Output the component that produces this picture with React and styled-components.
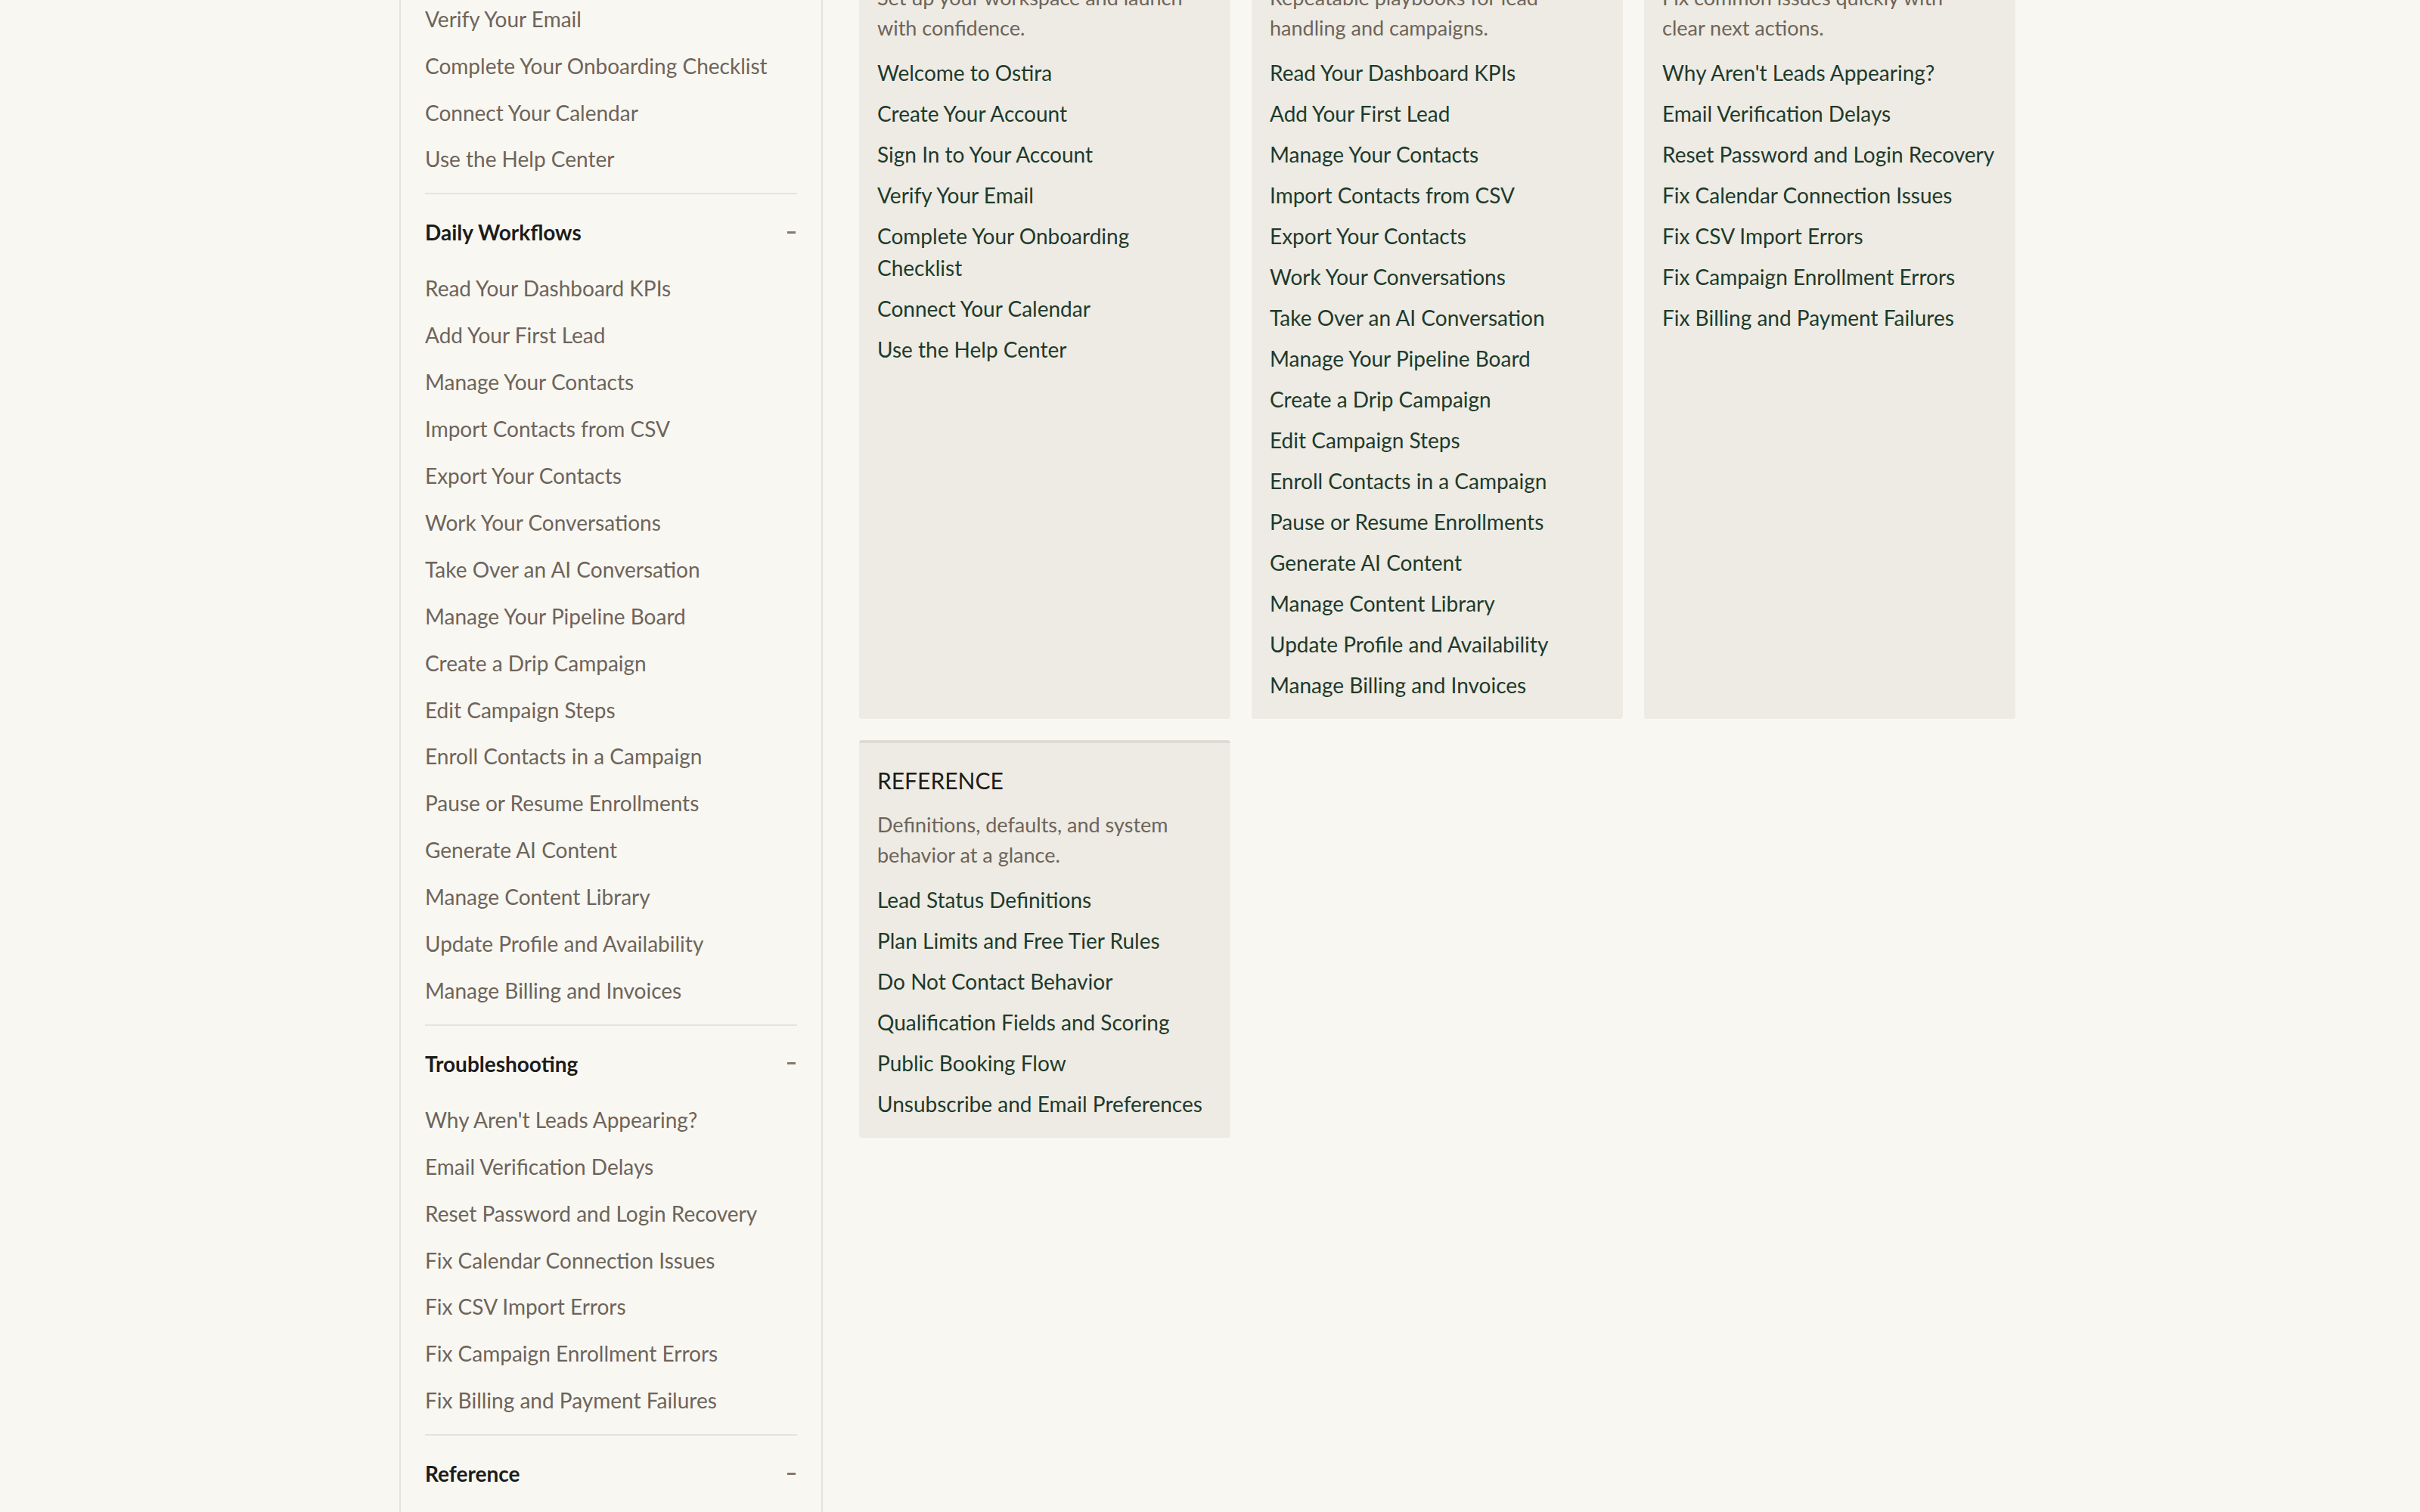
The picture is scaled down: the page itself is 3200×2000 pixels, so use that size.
import React, { useLayoutEffect, useRef } from "react";
import styled, { createGlobalStyle } from "styled-components";

const GlobalStyle = createGlobalStyle`
  html, body {
    margin: 0;
    padding: 0;
    background: #f8f7f2;
  }
  body {
    font-family: Lato, "Noto Sans", sans-serif;
    color: #1d1c1a;
    -webkit-font-smoothing: antialiased;
  }
  * {
    box-sizing: border-box;
  }
`;

const Viewport = styled.div`
  height: 100vh;
  overflow: hidden;
  background: #f8f7f2;
`;

const Layout = styled.div`
  max-width: 2144px;
  margin: 0 auto;
  padding: 48px 0 120px;
  display: flex;
  align-items: flex-start;
  gap: 48px;
`;

const Sidebar = styled.nav`
  flex: 0 0 560px;
  border-left: 2px solid #e6e3dc;
  border-right: 2px solid #e6e3dc;
  padding: 8px 32px 40px;
`;

const Group = styled.section`
  border-top: ${({ $first }) => ($first ? "none" : "2px solid #e6e3dc")};
`;

const GroupHead = styled.div`
  display: flex;
  align-items: center;
  justify-content: space-between;
  padding: 30px 0 24px;
  font-size: 28px;
  line-height: 40px;
  font-weight: 700;
  color: #1d1c1a;
`;

const Minus = styled.span`
  display: inline-block;
  width: 11px;
  height: 3px;
  margin-right: 2px;
  background: #86796a;
`;

const NavList = styled.ul`
  list-style: none;
  margin: 0;
  padding: 0 0 13px;
`;

const NavItem = styled.li`
  padding: 11px 0;
  font-size: 28px;
  line-height: 39.9px;
  color: #6e645a;
`;

const Main = styled.main`
  flex: 1;
  min-width: 0;
`;

const Hero = styled.header`
  padding-bottom: 58px;
`;

const HeroTitle = styled.h1`
  margin: 0 0 16px;
  font-size: 56px;
  line-height: 64px;
  font-weight: 600;
  color: #1d1c1a;
`;

const HeroText = styled.p`
  margin: 0;
  font-size: 28px;
  line-height: 40px;
  color: #6e645a;
`;

const Grid = styled.div`
  display: grid;
  grid-template-columns: repeat(3, 491px);
  gap: 28px;
`;

const Card = styled.article`
  background: #edebe3;
  border-top: 4px solid #dedbd3;
  border-radius: 4px;
  padding: 28px 24px 24px;
`;

const CardTitle = styled.h2`
  margin: 0 0 18px;
  font-size: 30px;
  line-height: 42px;
  font-weight: 400;
  text-transform: uppercase;
  color: #1d1c1a;
`;

const CardText = styled.p`
  max-width: 424px;
  margin: 0 0 18px;
  font-size: 27px;
  line-height: 40px;
  color: #6e645a;
`;

const LinkList = styled.ul`
  list-style: none;
  margin: 0;
  padding: 0;
  display: flex;
  flex-direction: column;
  gap: 12px;
`;

const ArticleLink = styled.a`
  display: block;
  font-size: 28px;
  line-height: 42px;
  color: #1e3a2c;
  text-decoration: none;
`;

const sections = [
  {
    title: "Getting Started",
    blurb: "Set up your workspace and launch with confidence.",
    items: [
      "Welcome to Ostira",
      "Create Your Account",
      "Sign In to Your Account",
      "Verify Your Email",
      "Complete Your Onboarding Checklist",
      "Connect Your Calendar",
      "Use the Help Center",
    ],
  },
  {
    title: "Daily Workflows",
    blurb: "Repeatable playbooks for lead handling and campaigns.",
    items: [
      "Read Your Dashboard KPIs",
      "Add Your First Lead",
      "Manage Your Contacts",
      "Import Contacts from CSV",
      "Export Your Contacts",
      "Work Your Conversations",
      "Take Over an AI Conversation",
      "Manage Your Pipeline Board",
      "Create a Drip Campaign",
      "Edit Campaign Steps",
      "Enroll Contacts in a Campaign",
      "Pause or Resume Enrollments",
      "Generate AI Content",
      "Manage Content Library",
      "Update Profile and Availability",
      "Manage Billing and Invoices",
    ],
  },
  {
    title: "Troubleshooting",
    blurb: "Fix common issues quickly with clear next actions.",
    items: [
      "Why Aren't Leads Appearing?",
      "Email Verification Delays",
      "Reset Password and Login Recovery",
      "Fix Calendar Connection Issues",
      "Fix CSV Import Errors",
      "Fix Campaign Enrollment Errors",
      "Fix Billing and Payment Failures",
    ],
  },
  {
    title: "Reference",
    blurb: "Definitions, defaults, and system behavior at a glance.",
    items: [
      "Lead Status Definitions",
      "Plan Limits and Free Tier Rules",
      "Do Not Contact Behavior",
      "Qualification Fields and Scoring",
      "Public Booking Flow",
      "Unsubscribe and Email Preferences",
    ],
  },
];

export default function App() {
  const viewRef = useRef(null);

  useLayoutEffect(() => {
    // page is shown scrolled down, as in the capture
    if (viewRef.current) viewRef.current.scrollTop = 341;
  }, []);

  return (
    <>
      <GlobalStyle />
      <Viewport ref={viewRef}>
        <Layout>
          <Sidebar>
            {sections.map((s, i) => (
              <Group key={s.title} $first={i === 0}>
                <GroupHead>
                  {s.title}
                  <Minus />
                </GroupHead>
                <NavList>
                  {s.items.map((item) => (
                    <NavItem key={item}>{item}</NavItem>
                  ))}
                </NavList>
              </Group>
            ))}
          </Sidebar>

          <Main>
            <Hero>
              <HeroTitle>Help Center</HeroTitle>
              <HeroText>Guides, workflows, and answers for Ostira.</HeroText>
            </Hero>
            <Grid>
              {sections.map((s) => (
                <Card key={s.title}>
                  <CardTitle>{s.title}</CardTitle>
                  <CardText>{s.blurb}</CardText>
                  <LinkList>
                    {s.items.map((item) => (
                      <li key={item}>
                        <ArticleLink href="#">{item}</ArticleLink>
                      </li>
                    ))}
                  </LinkList>
                </Card>
              ))}
            </Grid>
          </Main>
        </Layout>
      </Viewport>
    </>
  );
}
